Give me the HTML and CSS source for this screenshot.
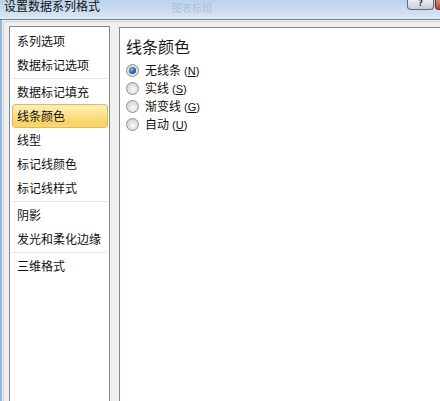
FILE: index.html
```html
<!DOCTYPE html>
<html lang="zh-CN">
<head>
<meta charset="utf-8">
<title>设置数据系列格式</title>
<link rel="stylesheet" href="styles.css">
</head>
<body>
<div class="window">
  <div class="titlebar">
    <span class="title">设置数据系列格式</span>
    <span class="ghost">图表标题</span>
    <div class="controls">
      <div class="btn-help">?</div>
      <div class="btn-close"></div>
    </div>
  </div>
  <div class="frame-line"></div>
  <div class="client">
    <div class="inner">
      <div class="nav">
        <div class="item">系列选项</div>
        <div class="item">数据标记选项</div>
        <div class="sep"></div>
        <div class="item">数据标记填充</div>
        <div class="item selected">线条颜色</div>
        <div class="item">线型</div>
        <div class="item">标记线颜色</div>
        <div class="item">标记线样式</div>
        <div class="sep"></div>
        <div class="item">阴影</div>
        <div class="item">发光和柔化边缘</div>
        <div class="sep"></div>
        <div class="item">三维格式</div>
      </div>
      <div class="pane">
        <div class="heading">线条颜色</div>
        <div class="options">
          <div class="opt"><span class="radio checked"></span><span class="label">无线条<span class="key">(<u>N</u>)</span></span></div>
          <div class="opt"><span class="radio"></span><span class="label">实线<span class="key">(<u>S</u>)</span></span></div>
          <div class="opt"><span class="radio"></span><span class="label">渐变线<span class="key">(<u>G</u>)</span></span></div>
          <div class="opt"><span class="radio"></span><span class="label">自动<span class="key">(<u>U</u>)</span></span></div>
        </div>
      </div>
    </div>
  </div>
</div>
</body>
</html>
```

FILE: styles.css
```css
html, body {
  margin: 0;
  padding: 0;
  background: #f0f0f0;
}

.window {
  width: 440px;
  height: 401px;
  overflow: hidden;
  display: flex;
  flex-direction: column;
  font-family: "Noto Sans CJK SC", "Noto Sans", sans-serif;
  color: #111;
}

.titlebar {
  height: 19px;
  flex: none;
  display: flex;
  align-items: flex-start;
  background: linear-gradient(#bcd2ea, #cadcef 50%, #d6e4f3 85%, #e3ecf6);
}

.title {
  font-size: 12px;
  line-height: 14px;
  margin-top: -1px;
  padding-left: 4px;
  color: #111;
}

.ghost {
  font-size: 10px;
  line-height: 12px;
  margin-top: 2px;
  margin-left: 72px;
  color: rgba(90, 110, 140, 0.25);
  filter: blur(0.7px);
}

.controls {
  margin-left: auto;
  display: flex;
  gap: 1px;
}

.btn-help {
  width: 27px;
  height: 10px;
  box-sizing: border-box;
  border: 1px solid #5f6d7d;
  border-top: 0;
  border-radius: 0 0 4px 4px;
  background: linear-gradient(#e8edf2, #c5ced8);
  font-family: "DejaVu Sans", sans-serif;
  font-size: 8px;
  font-weight: bold;
  line-height: 8px;
  text-align: center;
  color: #3a3a3a;
}

.btn-close {
  width: 5px;
  height: 10px;
  box-sizing: border-box;
  border: 1px solid #6b2a22;
  border-top: 0;
  border-right: 0;
  border-radius: 0 0 0 4px;
  background: linear-gradient(#dc8a7e, #c4402e);
}

.frame-line {
  height: 1px;
  flex: none;
  background: #6f7d8b;
}

.client {
  flex: 1;
  display: flex;
  background: #f0f0f0;
  border-left: 2px solid #94b6dd;
  padding: 1px 0 0 1px;
}

.inner {
  flex: 1;
  display: flex;
  align-items: stretch;
  gap: 9px;
  padding: 4px 0 0 5px;
  border-left: 1px solid #d2d2d2;
  border-top: 1px solid #d2d2d2;
  border-top-left-radius: 4px;
}

.nav {
  width: 101px;
  box-sizing: border-box;
  flex: none;
  background: #fff;
  border: 1px solid #828790;
  padding-top: 2px;
  margin-bottom: -10px;
}

.item {
  height: 24px;
  line-height: 24px;
  font-size: 12px;
  padding-left: 7px;
  white-space: nowrap;
  color: #111;
}

.item.selected {
  box-sizing: border-box;
  margin: 0 1px 0 2px;
  padding-left: 4px;
  line-height: 22px;
  border: 1px solid #dfb95c;
  border-radius: 3px;
  background: linear-gradient(#fdf0b6, #fce18a 45%, #f9d368 80%, #f8d875);
}

.sep {
  height: 1px;
  margin: 1px 2px;
  background: #e6e6e6;
}

.pane {
  flex: 1;
  background: #fff;
  border: 1px solid #828790;
  border-right: 0;
  margin-top: 1px;
  margin-bottom: -10px;
  padding: 7px 0 0 6px;
}

.heading {
  font-size: 16px;
  line-height: 22px;
  color: #1a1a1a;
}

.options {
  margin-top: 4px;
}

.opt {
  height: 18px;
  display: flex;
  align-items: center;
}

.radio {
  width: 13px;
  height: 13px;
  box-sizing: border-box;
  border-radius: 50%;
  border: 1px solid #929292;
  background: radial-gradient(circle at 55% 60%, #fbfbfb 0%, #e2e2e2 45%, #c9c9c9 100%);
  position: relative;
  flex: none;
}

.radio.checked::after {
  content: "";
  position: absolute;
  left: 2px;
  top: 2px;
  width: 7px;
  height: 7px;
  border-radius: 50%;
  background: radial-gradient(circle at 40% 35%, #8cc3ee 0%, #2f6ea8 45%, #153f6b 100%);
}

.label {
  margin-left: 6px;
  font-size: 12px;
  line-height: 18px;
  color: #111;
  white-space: nowrap;
}

.key {
  font-family: "Liberation Sans", sans-serif;
  font-size: 11px;
  margin-left: 3px;
}
```
